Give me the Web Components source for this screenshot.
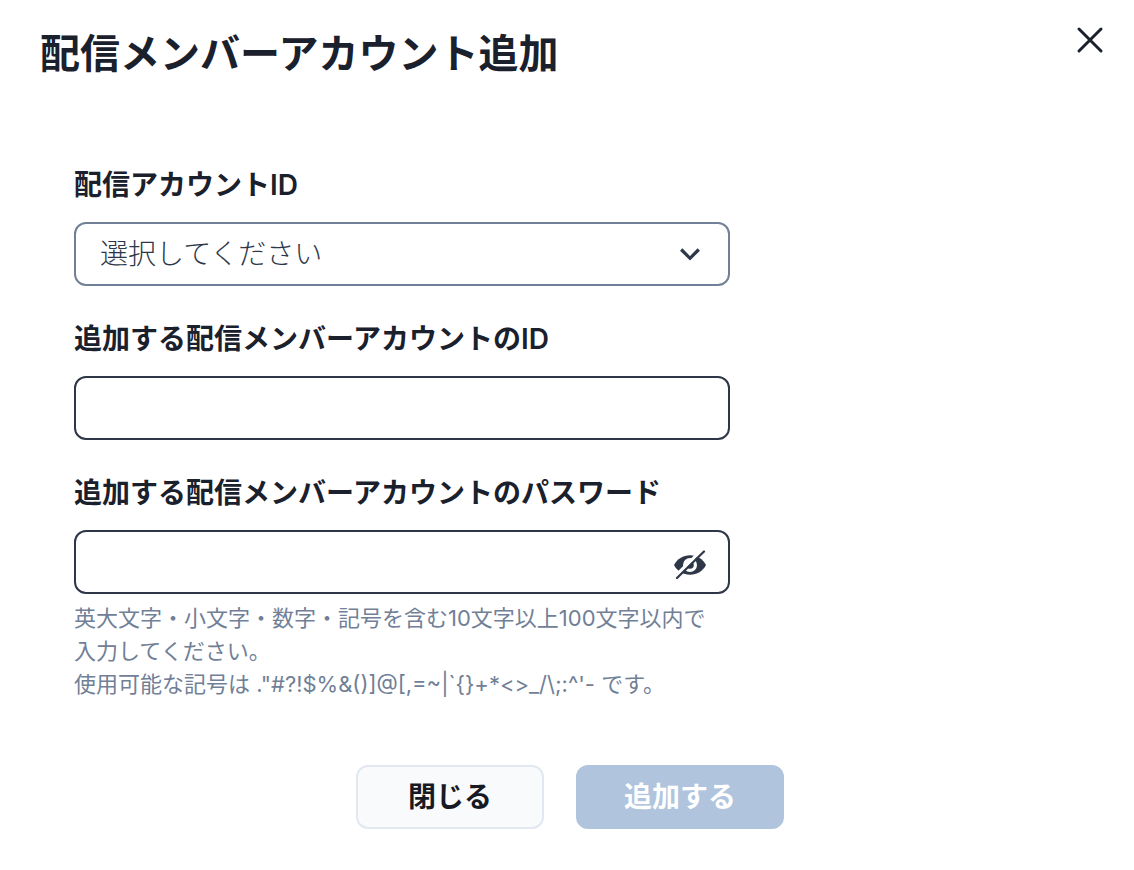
<!DOCTYPE html>
<html lang="ja">
<head>
<meta charset="utf-8">
<meta name="viewport" content="width=device-width, initial-scale=1">
<title>配信メンバーアカウント追加</title>
<style>
  body {
    margin: 0;
    background: #fff;
    color: #1a202c;
    font-family: Inter, "Noto Sans CJK JP", sans-serif;
  }
</style>
</head>
<body>
<account-dialog heading="配信メンバーアカウント追加">
  <select-field label="配信アカウントID" placeholder="選択してください"></select-field>
  <text-field label="追加する配信メンバーアカウントのID"></text-field>
  <password-field label="追加する配信メンバーアカウントのパスワード">
    英大文字・小文字・数字・記号を含む10文字以上100文字以内で<br>入力してください。<br>使用可能な記号は ."#?!$%&amp;()]@[,=~|`{}+*&lt;&gt;_/\;:^'- です。
  </password-field>
  <action-button slot="actions">閉じる</action-button>
  <action-button slot="actions" primary>追加する</action-button>
</account-dialog>

<script>
  const fieldStyles = `
    :host { display: block; }
    * { box-sizing: border-box; }
    label {
      display: block;
      margin-bottom: 16px;
      font-size: 28px;
      line-height: 42px;
      font-weight: 600;
    }
    .control { display: grid; align-items: center; }
    .control > * { grid-area: 1 / 1; }
    input, select {
      width: 100%;
      height: 64px;
      margin: 0;
      padding: 0 24px;
      border: 2px solid #2d3748;
      border-radius: 12px;
      background: #fff;
      color: #2d3748;
      font-family: inherit;
      font-size: 28px;
      appearance: none;
    }
  `;

  class AccountDialog extends HTMLElement {
    constructor() {
      super();
      this.attachShadow({ mode: "open" }).innerHTML = `
        <style>
          :host { display: block; }
          header {
            display: flex;
            justify-content: space-between;
            align-items: flex-start;
            padding: 24px 20px 0 40px;
          }
          h1 { margin: 0; font-size: 40px; line-height: 60px; font-weight: 600; }
          button {
            display: grid;
            place-items: center;
            width: 48px;
            height: 48px;
            margin-top: -8px;
            padding: 0;
            border: 0;
            background: none;
            color: #1a202c;
          }
          form { padding: 80px 32px 40px 74px; }
          .fields { display: grid; gap: 32px; max-width: 656px; }
          footer {
            display: flex;
            justify-content: center;
            gap: 32px;
            margin: 64px 0 0 -36px;
          }
        </style>
        <section role="dialog" aria-labelledby="heading">
          <header>
            <h1 id="heading"></h1>
            <button type="button" aria-label="閉じる">
              <svg width="28" height="28" viewBox="0 0 28 28" fill="none" stroke="currentColor" stroke-width="3" stroke-linecap="round"><path d="M3 3 25 25M25 3 3 25"/></svg>
            </button>
          </header>
          <form>
            <div class="fields"><slot></slot></div>
            <footer><slot name="actions"></slot></footer>
          </form>
        </section>`;
      this.shadowRoot.querySelector("h1").textContent = this.getAttribute("heading");
    }
  }

  class SelectField extends HTMLElement {
    constructor() {
      super();
      this.attachShadow({ mode: "open" }).innerHTML = `
        <style>${fieldStyles}
          select { border-color: #718096; font-weight: 300; }
          svg { justify-self: end; margin-right: 30px; pointer-events: none; }
        </style>
        <label for="control"></label>
        <div class="control">
          <select id="control"><option></option></select>
          <svg width="20" height="14" viewBox="0 0 20 14" fill="none" stroke="#2d3748" stroke-width="3.2"><path d="m1.200 2.500 8.800 8.800L18.800 2.500"/></svg>
        </div>`;
      this.shadowRoot.querySelector("label").textContent = this.getAttribute("label");
      this.shadowRoot.querySelector("option").textContent = this.getAttribute("placeholder");
    }
  }

  class TextField extends HTMLElement {
    constructor() {
      super();
      this.attachShadow({ mode: "open" }).innerHTML = `
        <style>${fieldStyles}</style>
        <label for="control"></label>
        <div class="control"><input id="control" type="text"></div>`;
      this.shadowRoot.querySelector("label").textContent = this.getAttribute("label");
    }
  }

  class PasswordField extends HTMLElement {
    constructor() {
      super();
      this.attachShadow({ mode: "open" }).innerHTML = `
        <style>${fieldStyles}
          input { padding-right: 72px; }
          button {
            display: grid;
            place-items: center;
            justify-self: end;
            width: 40px;
            height: 40px;
            margin-right: 20px;
            padding: 0;
            border: 0;
            background: none;
            color: #2d3748;
          }
          p {
            margin: 8px 0 0;
            color: #718096;
            font-size: 22px;
            line-height: 33px;
            font-weight: 400;
          }
        </style>
        <label for="control"></label>
        <div class="control">
          <input id="control" type="password" aria-describedby="help">
          <button type="button" aria-label="パスワードを表示">
            <svg width="34" height="34" viewBox="0 0 34 34">
              <defs><mask id="cut">
                <rect width="34" height="34" fill="#fff"/>
                <circle cx="17" cy="20" r="7" fill="#000"/>
                <circle cx="17" cy="20" r="3.800" fill="#fff"/>
                <path d="M2 31.500 29 5" stroke="#000" stroke-width="3.400"/>
              </mask></defs>
              <path mask="url(#cut)" fill="currentColor" d="M1 20C4 14 10 10.200 17 10.200S30 14 33 20c-3 6-9 9.800-16 9.800S4 26 1 20Z"/>
              <path d="M4 33 31 6.500" stroke="currentColor" stroke-width="2.200" stroke-linecap="round"/>
            </svg>
          </button>
        </div>
        <p id="help"><slot></slot></p>`;
      this.shadowRoot.querySelector("label").textContent = this.getAttribute("label");
    }
  }

  class ActionButton extends HTMLElement {
    constructor() {
      super();
      this.attachShadow({ mode: "open" }).innerHTML = `
        <style>
          :host { display: block; }
          button {
            height: 64px;
            padding: 0 50px;
            border: 2px solid #e2e8f0;
            border-radius: 12px;
            background: #f9fafc;
            color: #171923;
            font-family: inherit;
            font-size: 28px;
            line-height: 42px;
            font-weight: 600;
          }
          :host([primary]) button {
            padding: 0 46px;
            border-color: #b0c4de;
            background: #b0c4de;
            color: #fff;
          }
        </style>
        <button type="button"><slot></slot></button>`;
      this.shadowRoot.querySelector("button").disabled = this.hasAttribute("primary");
    }
  }

  customElements.define("account-dialog", AccountDialog);
  customElements.define("select-field", SelectField);
  customElements.define("text-field", TextField);
  customElements.define("password-field", PasswordField);
  customElements.define("action-button", ActionButton);
</script>
</body>
</html>
